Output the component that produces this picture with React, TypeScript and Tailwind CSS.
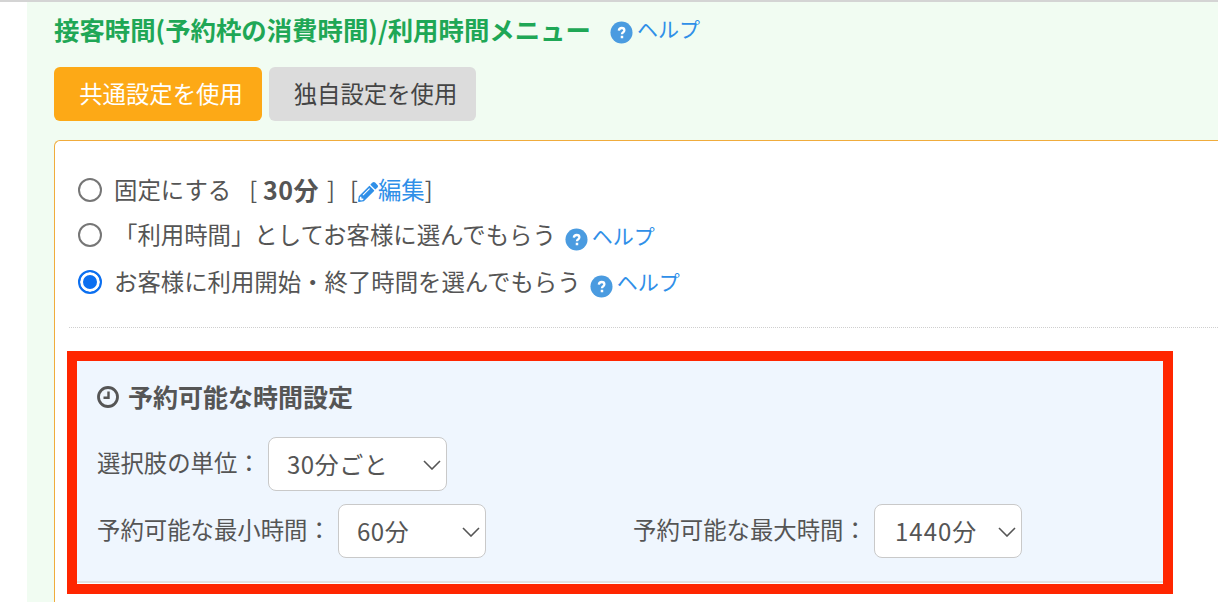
import React from 'react';
import { FaPencilAlt } from 'react-icons/fa';

const fontStack = '[font-family:"Noto_Sans_CJK_JP","Noto_Sans",sans-serif]';

const HelpLink: React.FC<{ className?: string }> = ({ className = '' }) => (
  <a className={`flex items-center text-[#2f8fe8] text-[21px] leading-none ${className}`}>
    <svg viewBox="0 0 24 24" className="w-[23px] h-[23px] mt-[9px] mr-[4px] shrink-0">
      <circle cx="12" cy="12" r="11.5" fill="#4a9be0" />
      <path d="M9.2 10c.2-1.700 1.400-2.700 3-2.700 1.600 0 2.800 1 2.800 2.400 0 1.100-.6 1.700-1.500 2.300-.7.500-1 .8-1 1.700" fill="none" stroke="#fff" strokeWidth="2.400" />
      <rect x="11.200" y="15.400" width="2.600" height="2.600" fill="#fff" />
    </svg>
    ヘルプ
  </a>
);

const Radio: React.FC<{ checked?: boolean }> = ({ checked = false }) => (
  <input
    type="radio"
    name="mode"
    defaultChecked={checked}
    className="appearance-none w-[24px] h-[24px] rounded-full border-2 border-[#767676] bg-white shrink-0 checked:border-[#0b6ff0] checked:bg-[#0b6ff0] checked:shadow-[inset_0_0_0_3px_white]"
  />
);

const SelectBox: React.FC<{ value: string; className: string; textClass?: string }> = ({ value, className, textClass = 'pl-[18px] tracking-[0.5px]' }) => (
  <div className={`relative h-[54px] ${className}`}>
    <select
      defaultValue={value}
      className={`appearance-none w-full h-full bg-white border border-[#c9c9c9] rounded-[8px] text-[24px] text-[#555] outline-none ${textClass}`}
    >
      <option>{value}</option>
    </select>
    <svg viewBox="0 0 18 10" className="absolute right-[6px] top-[23px] w-[18px] h-[10px] pointer-events-none">
      <path d="M1 1l8 8 8-8" fill="none" stroke="#555" strokeWidth="1.600" />
    </svg>
  </div>
);

export default function App() {
  return (
    <div className={`${fontStack} h-[602px] w-[1218px] overflow-hidden bg-white border-t-2 border-[#d4d4d4] text-[#555]`}>
      <div className="ml-[27px] h-full bg-[#f1fcf2] pl-[27px] pt-[13px]">
        <div className="flex items-center h-[32px]">
          <h2 className="text-[25.400px] pb-[2px] leading-none font-bold text-[#1fa756] whitespace-nowrap w-[556px]">
            接客時間(予約枠の消費時間)/利用時間メニュー
          </h2>
          <HelpLink className="pb-[6px]" />
        </div>

        <div className="flex gap-[7px] mt-[20px]">
          <button className="w-[208px] h-[54px] pl-[6px] rounded-[6px] bg-[#fda916] text-white text-[23.400px]">共通設定を使用</button>
          <button className="w-[207px] h-[54px] pl-[6px] rounded-[6px] bg-[#dcdcdc] text-[#444] text-[23.400px]">独自設定を使用</button>
        </div>

        <div className="mt-[19px] h-[500px] bg-white border-l border-t border-[#f0ac3c] rounded-tl-[6px] pl-[14px] pt-[26px]">
          <div className="flex flex-col">
            <label className="flex items-center h-[45px] gap-[12px] text-[23.400px] whitespace-nowrap pl-[9px]">
              <Radio />
              <span className="flex items-center">
                固定にする
                <span className="ml-[18px]">[</span>
                <b className="ml-[6px] mr-[8px] font-bold text-[25px] tracking-[0.5px]">30分</b>
                <span>]</span>
                <span className="ml-[15px]">[</span>
                <FaPencilAlt className="text-[#2f8fe8] w-[20px] h-[20px] mt-[4px]" />
                <a className="text-[#2f8fe8]">編集</a>
                <span>]</span>
              </span>
            </label>
            <label className="flex items-center h-[46px] gap-[12px] text-[23.400px] whitespace-nowrap pl-[9px]">
              <Radio />
              <span>「利用時間」としてお客様に選んでもらう</span>
              <HelpLink className="-ml-[3px]" />
            </label>
            <label className="flex items-center h-[47px] gap-[12px] text-[23.400px] whitespace-nowrap pl-[9px]">
              <Radio checked />
              <span>お客様に利用開始・終了時間を選んでもらう</span>
              <HelpLink className="-ml-[3px]" />
            </label>
          </div>

          <div className="mt-[22px] border-t border-dotted border-[#cfcfcf]" />

          <div className="-ml-[2px] mt-[23px] w-[1106px] h-[243px] border-[10px] border-[#ff2600] bg-white">
            <div className="h-[222px] bg-[#eff6fe] border-b-2 border-[#e2e2e2] pl-[20px] pt-[20px]">
              <div className="flex items-center gap-[9px] text-[25px] leading-none font-bold h-[32px]">
                <svg viewBox="0 0 22 22" className="w-[22px] h-[22px] shrink-0">
                  <circle cx="11" cy="11" r="9.500" fill="none" stroke="#555" strokeWidth="2.800" />
                  <path d="M11.500 5.500v6.200H6.500" fill="none" stroke="#555" strokeWidth="2.400" />
                </svg>
                <span className="pb-[2px]">予約可能な時間設定</span>
              </div>

              <div className="flex items-center mt-[24px] text-[23.400px]">
                <span className="w-[171px] pb-[2px] whitespace-nowrap">選択肢の単位：</span>
                <SelectBox value="30分ごと" className="w-[179px]" />
              </div>

              <div className="flex items-center mt-[13px] text-[23.400px] whitespace-nowrap">
                <span className="w-[241px] pb-[2px]">予約可能な最小時間：</span>
                <SelectBox value="60分" className="w-[148px]" />
                <span className="ml-[147px] w-[241px] pb-[2px]">予約可能な最大時間：</span>
                <SelectBox value="1440分" className="w-[148px]" textClass="pl-[20px] tracking-[1px]" />
              </div>
            </div>
          </div>
        </div>
      </div>
    </div>
  );
}
